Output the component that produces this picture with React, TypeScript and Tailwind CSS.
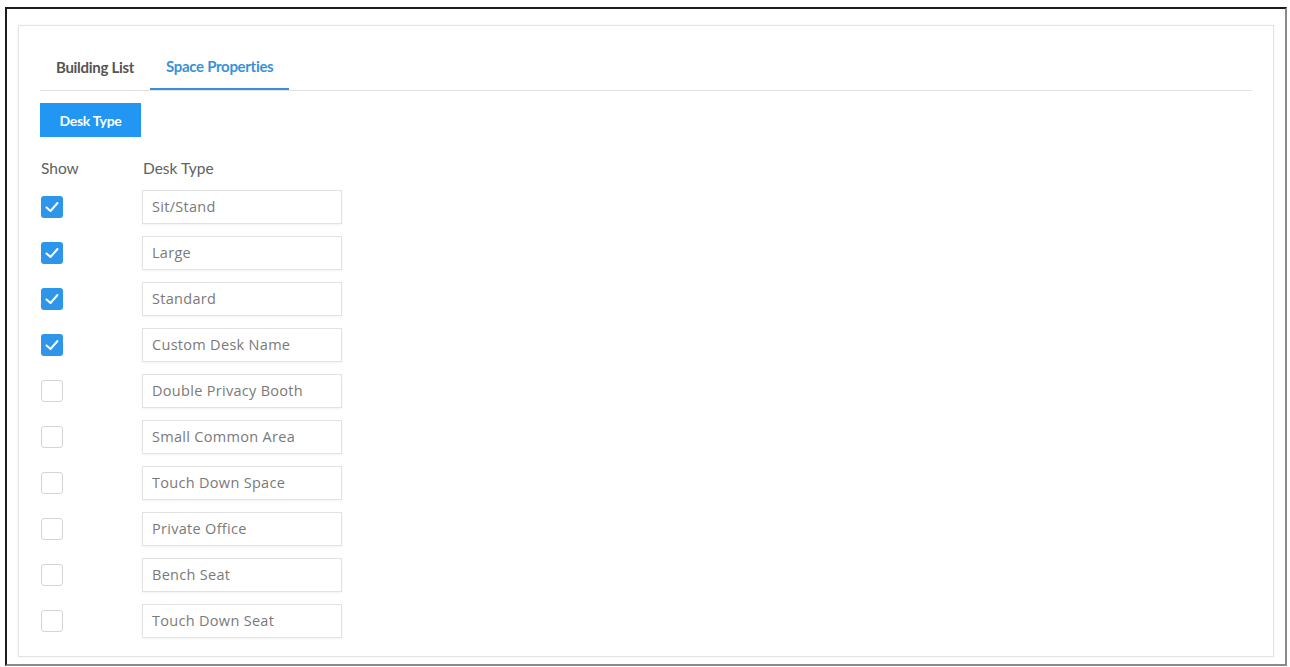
import React from 'react'

const deskTypes = [
  { name: 'Sit/Stand', show: true },
  { name: 'Large', show: true },
  { name: 'Standard', show: true },
  { name: 'Custom Desk Name', show: true },
  { name: 'Double Privacy Booth', show: false },
  { name: 'Small Common Area', show: false },
  { name: 'Touch Down Space', show: false },
  { name: 'Private Office', show: false },
  { name: 'Bench Seat', show: false },
  { name: 'Touch Down Seat', show: false },
]

const Checkbox = ({ checked }: { checked: boolean }) => {
  if (!checked) {
    return <div className="w-[22px] h-[22px] rounded-[3px] border border-[#d4d4d4] bg-white" />
  }
  return (
    <div className="w-[22px] h-[22px] rounded-[3px] bg-[#2d96ea] flex items-center justify-center">
      <svg width="16" height="16" viewBox="0 0 16 16" fill="none">
        <path d="M2.5 8.5 L6.5 12 L13.5 4" stroke="white" strokeWidth="2" strokeLinecap="round" strokeLinejoin="round" />
      </svg>
    </div>
  )
}

const App = () => {
  return (
    <div className="w-full h-[667px] bg-white pt-[7px] pl-[5px] pr-[3px] pb-px" style={{ fontFamily: 'Lato, "Open Sans", sans-serif' }}>
      <div className="h-full border-2 border-l-[#1c1c1c] border-t-[#1c1c1c] border-r-[#8a8a8a] border-b-[#8a8a8a] pt-4 pl-[11px] pr-[11px] pb-[7px]">
        <div className="h-full border border-[#e4e4e4] shadow-[0_0_3px_rgba(0,0,0,0.06)] pt-[18px] px-[21px]">
          {/* tabs */}
          <div className="flex border-b border-[#e2e2e2]">
            <div className="h-[46px] px-4 flex items-center text-[15px] font-bold text-[#555] tracking-[-0.3px]">
              Building List
            </div>
            <div className="h-[46px] px-4 flex items-center text-[15px] font-bold text-[#3a91d8] tracking-[-0.3px] border-b-2 border-[#3a91d8] -mb-px">
              Space Properties
            </div>
          </div>

          <button className="mt-3 h-[34px] w-[101px] bg-[#2196f3] text-white text-[14px] font-bold tracking-[-0.3px]">
            Desk Type
          </button>

          <div className="mt-[22px] flex text-[15.5px] text-[#616161] h-5 items-center">
            <div className="w-[102px] pl-px">Show</div>
            <div className="pl-px">Desk Type</div>
          </div>

          <div className="mt-[11px] flex flex-col gap-3">
            {deskTypes.map((d) => (
              <div key={d.name} className="flex items-center h-[34px]">
                <div className="w-[102px] pl-px">
                  <Checkbox checked={d.show} />
                </div>
                <div
                  className="w-[200px] h-[34px] border border-[#e2e2e2] shadow-[0_1px_2px_rgba(0,0,0,0.05)] flex items-center px-[9px] text-[14.5px] tracking-[0.3px] text-[#7a7a7a]"
                  style={{ fontFamily: '"Open Sans", sans-serif' }}
                >
                  {d.name}
                </div>
              </div>
            ))}
          </div>
        </div>
      </div>
    </div>
  )
}

export default App
